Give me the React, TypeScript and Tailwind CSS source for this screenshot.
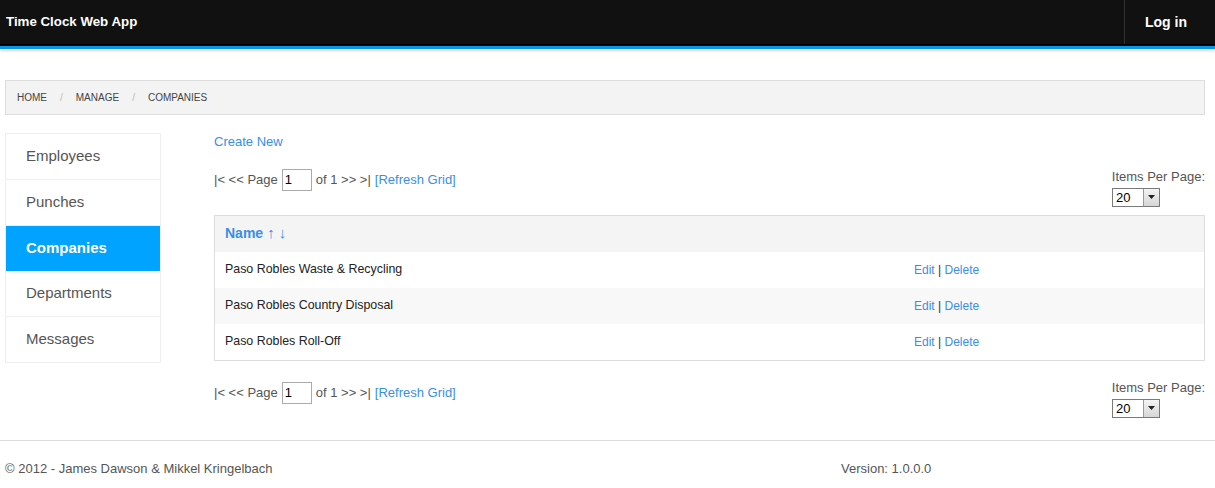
import React from "react";

const font = { fontFamily: '"Liberation Sans", Arial, sans-serif' };

function PerPage() {
  return (
    <div className="mt-[3px] flex flex-col items-end text-[13px] leading-[16px] text-[#555]">
      <span>Items Per Page:</span>
      <div className="mr-[45px] mt-[3px] flex h-[19px] w-[48px] items-stretch border border-[#7a7a7a] bg-white">
        <span className="flex-1 pl-[3px] text-[13px] leading-[17px] text-black">20</span>
        <span className="flex w-[16px] items-center justify-center border-l border-[#9a9a9a] bg-gradient-to-b from-[#f4f4f4] to-[#d6d6d6]">
          <svg width="7" height="4" viewBox="0 0 7 4">
            <path d="M0 0h7L3.5 4z" fill="#222" />
          </svg>
        </span>
      </div>
    </div>
  );
}

function Pager() {
  return (
    <div className="flex items-center gap-[4px] text-[13px] text-[#555]">
      <span>|&lt; &lt;&lt; Page</span>
      <span className="flex h-[22px] w-[30px] items-center border border-[#aaa] pl-[2px] text-black">1</span>
      <span>of 1 &gt;&gt; &gt;|</span>
      <span className="text-[#3a8ee6]">[Refresh Grid]</span>
    </div>
  );
}

const rows = ["Paso Robles Waste & Recycling", "Paso Robles Country Disposal", "Paso Robles Roll-Off"];
const nav = [
  { n: "Employees", h: "h-[46px]" },
  { n: "Punches", h: "h-[46px]" },
  { n: "Companies", h: "h-[45px]" },
  { n: "Departments", h: "h-[46px]" },
  { n: "Messages", h: "h-[45px]" },
];

export default function App() {
  return (
    <div className="min-h-[488px] bg-white" style={font}>
      <header className="bg-[#111] shadow-[0_2px_3px_rgba(0,0,0,0.15)]">
        <div className="flex h-[44px] items-stretch justify-between">
          <div className="flex items-center pl-[6px] text-[13.3px] font-bold text-white">Time Clock Web App</div>
          <div className="flex w-[91px] items-center justify-start border-l border-[#333] pl-[20px] text-[14px] font-bold text-white">
            Log in
          </div>
        </div>
        <div className="h-[2px] bg-black" />
        <div className="h-[3px] bg-[#0a96e6]" />
      </header>

      <div className="ml-[5px] mr-[10px] mt-[31px] flex h-[35px] items-center gap-[13px] border border-[#ddd] bg-[#f3f3f3] pl-[11px] text-[10px] uppercase text-[#444]">
        <span>Home</span>
        <span className="text-[#bbb]">/</span>
        <span>Manage</span>
        <span className="text-[#bbb]">/</span>
        <span>Companies</span>
      </div>

      <div className="mt-[18px] flex pl-[5px] pr-[10px]">
        <nav className="w-[156px] shrink-0 self-start border border-[#eee]">
          {nav.map(({ n, h }, i) => (
            <div
              key={n}
              className={
                n === "Companies"
                  ? `flex ${h} items-center bg-[#00a3ff] pl-[20px] text-[15px] font-bold text-white`
                  : `flex ${h} items-center pl-[20px] text-[15px] text-[#555] ${i < nav.length - 1 ? "border-b border-[#eee]" : ""}`
              }
            >
              {n}
            </div>
          ))}
        </nav>

        <main className="ml-[53px] flex-1">
          <div className="-mt-[1px] text-[13px] text-[#3a8ee6]">Create New</div>
          <div className="mt-[14px] flex items-start justify-between">
            <div className="mt-[3px]">
              <Pager />
            </div>
            <PerPage />
          </div>

          <div className="mt-[8px] border border-[#ddd]">
            <div className="flex h-[36px] items-center bg-[#f4f4f4] pl-[10px] text-[14px] font-bold text-[#3a8ee6]">
              Name <span className="ml-[4px] text-[15px] font-normal">↑ ↓</span>
            </div>
            {rows.map((r, i) => (
              <div
                key={r}
                className={`flex h-[36px] items-center text-[12.4px] text-[#222] ${i === 1 ? "bg-[#f8f8f8]" : "bg-white"}`}
              >
                <span className="w-[699px] pl-[10px]">{r}</span>
                <span className="text-[12px] text-[#3a8ee6]">
                  Edit <span className="text-[#333]">|</span> Delete
                </span>
              </div>
            ))}
          </div>

          <div className="mt-[16px] flex items-start justify-between">
            <div className="mt-[5px]">
              <Pager />
            </div>
            <PerPage />
          </div>
        </main>
      </div>

      <footer className="mt-[22px] flex border-t border-[#ddd] pl-[5px] pt-[18px] text-[13px] text-[#555]">
        <span className="w-[836px]">© 2012 - James Dawson &amp; Mikkel Kringelbach</span>
        <span>Version: 1.0.0.0</span>
      </footer>
    </div>
  );
}
